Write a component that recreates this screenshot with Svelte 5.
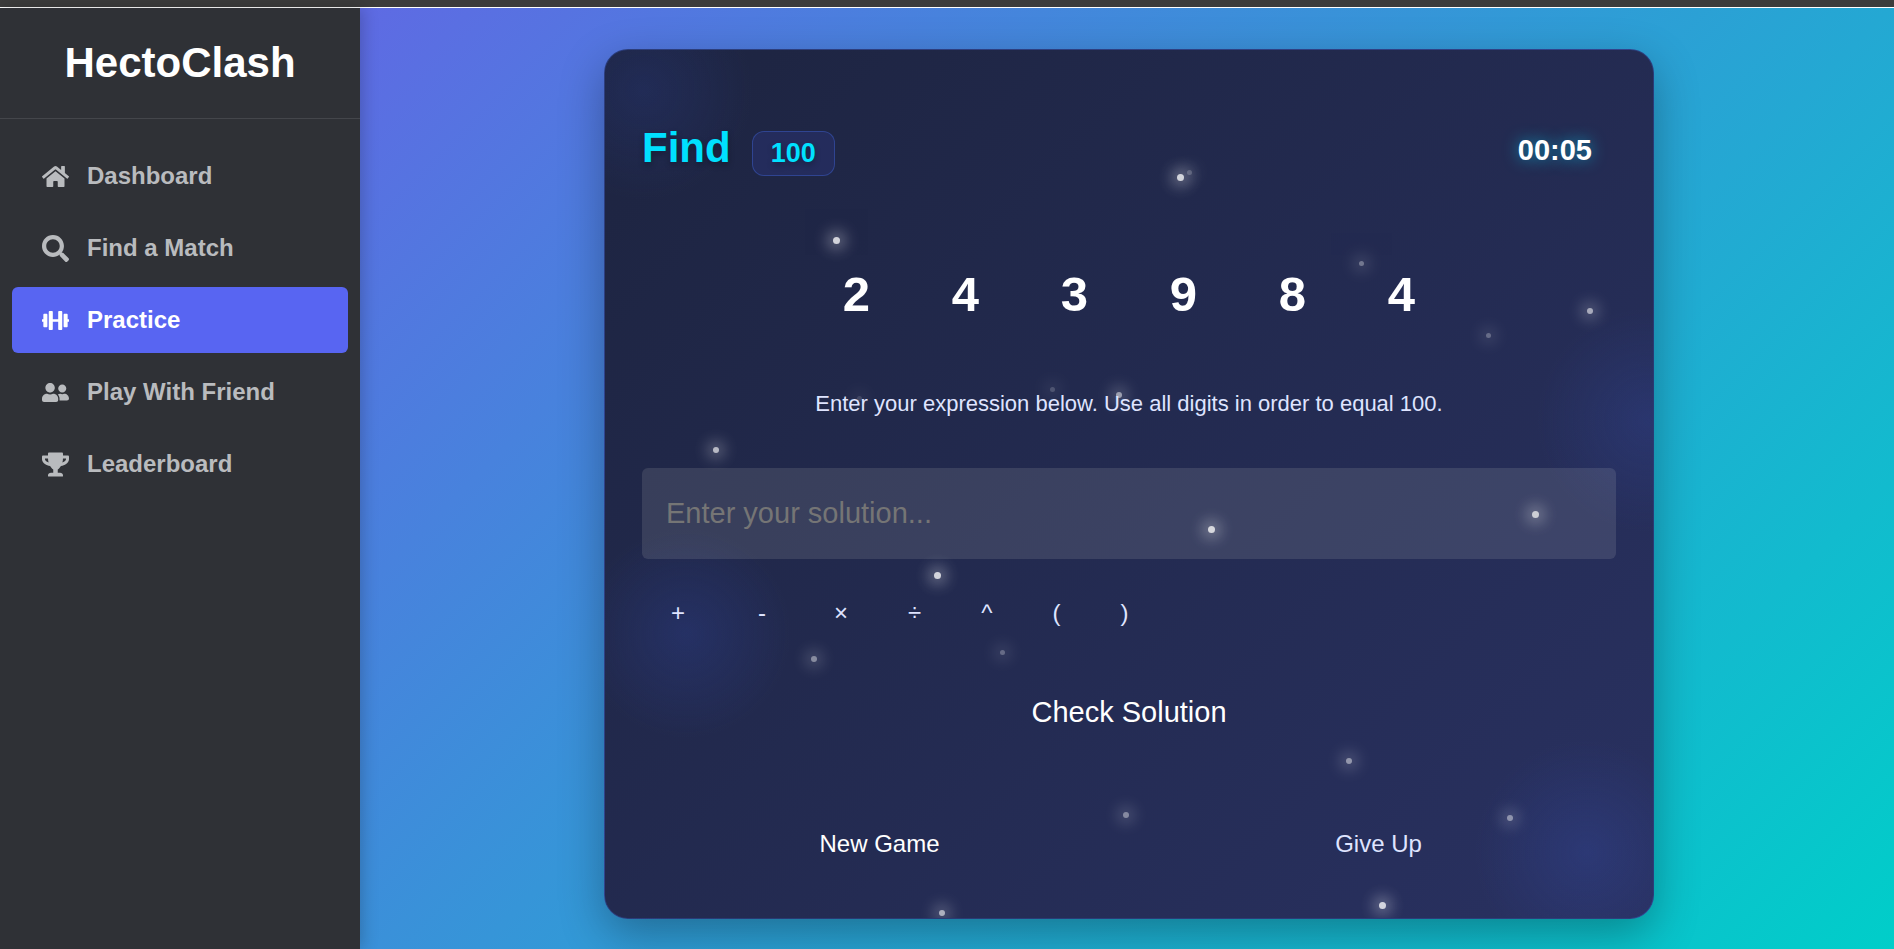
<script>
  const nav = [
    {
      label: 'Dashboard',
      box: '0 0 576 512',
      d: 'M280.37 148.26L96 300.11V464a16 16 0 0 0 16 16l112.06-.29a16 16 0 0 0 15.92-16V368a16 16 0 0 1 16-16h64a16 16 0 0 1 16 16v95.64a16 16 0 0 0 16 16.05L464 480a16 16 0 0 0 16-16V300L295.67 148.26a12.19 12.19 0 0 0-15.3 0zM571.6 251.47L488 182.56V44.05a12 12 0 0 0-12-12h-56a12 12 0 0 0-12 12v72.61L318.47 43a48 48 0 0 0-61 0L4.34 251.47a12 12 0 0 0-1.6 16.9l25.5 31A12 12 0 0 0 45.15 301l235.22-193.74a12.19 12.19 0 0 1 15.3 0L530.9 301a12 12 0 0 0 16.9-1.6l25.5-31a12 12 0 0 0-1.7-16.93z'
    },
    {
      label: 'Find a Match',
      box: '0 0 512 512',
      d: 'M505 442.7L405.3 343c-4.5-4.5-10.6-7-17-7H372c27.6-35.3 44-79.7 44-128C416 93.1 322.9 0 208 0S0 93.1 0 208s93.1 208 208 208c48.3 0 92.7-16.4 128-44v16.3c0 6.4 2.5 12.5 7 17l99.7 99.7c9.4 9.4 24.6 9.4 33.9 0l28.3-28.3c9.4-9.4 9.4-24.6.1-34zM208 336c-70.7 0-128-57.2-128-128 0-70.7 57.2-128 128-128 70.7 0 128 57.2 128 128 0 70.7-57.2 128-128 128z'
    },
    {
      label: 'Practice',
      active: true,
      box: '0 0 640 512',
      d: 'M104 96H56c-13.3 0-24 10.7-24 24v104H8c-4.4 0-8 3.6-8 8v48c0 4.4 3.6 8 8 8h24v104c0 13.3 10.7 24 24 24h48c13.3 0 24-10.7 24-24V120c0-13.3-10.7-24-24-24zm528 128h-24V120c0-13.3-10.7-24-24-24h-48c-13.3 0-24 10.7-24 24v272c0 13.3 10.7 24 24 24h48c13.3 0 24-10.7 24-24V288h24c4.4 0 8-3.6 8-8v-48c0-4.4-3.6-8-8-8zM456 32h-48c-13.3 0-24 10.7-24 24v168H256V56c0-13.3-10.7-24-24-24h-48c-13.3 0-24 10.7-24 24v400c0 13.3 10.7 24 24 24h48c13.3 0 24-10.7 24-24V288h128v168c0 13.3 10.7 24 24 24h48c13.3 0 24-10.7 24-24V56c0-13.3-10.7-24-24-24z'
    },
    {
      label: 'Play With Friend',
      box: '0 0 640 512',
      d: 'M192 256c61.9 0 112-50.1 112-112S253.9 32 192 32 80 82.1 80 144s50.1 112 112 112zm76.8 32h-8.3c-20.8 10-43.9 16-68.5 16s-47.6-6-68.5-16h-8.3C51.6 288 0 339.6 0 403.2V432c0 26.5 21.5 48 48 48h288c26.5 0 48-21.5 48-48v-28.8c0-63.6-51.6-115.2-115.2-115.2zM480 256c53 0 96-43 96-96s-43-96-96-96-96 43-96 96 43 96 96 96zm48 32h-3.8c-13.9 4.8-28.6 8-44.2 8s-30.3-3.2-44.2-8H432c-20.4 0-39.2 5.9-55.7 15.4 24.4 26.3 39.7 61.2 39.7 99.8v38.4c0 2.2-.5 4.3-.6 6.4H592c26.5 0 48-21.5 48-48 0-61.9-50.1-112-112-112z'
    },
    {
      label: 'Leaderboard',
      box: '0 0 576 512',
      d: 'M552 64H448V24c0-13.3-10.7-24-24-24H152c-13.3 0-24 10.7-24 24v40H24C10.7 64 0 74.7 0 88v56c0 35.7 22.5 72.4 61.9 100.7 31.5 22.7 69.8 37.1 110 41.7C203.3 338.5 240 360 240 360v72h-48c-35.3 0-64 20.7-64 56v12c0 6.6 5.4 12 12 12h296c6.6 0 12-5.4 12-12v-12c0-35.3-28.7-56-64-56h-48v-72s36.7-21.5 68.1-73.6c40.3-4.6 78.6-19 110-41.7 39.3-28.3 61.9-65 61.9-100.7V88c0-13.3-10.7-24-24-24zM99.3 192.8C74.9 175.2 64 155.6 64 144v-16h64.2c1 32.6 5.8 61.2 12.8 86.2-15.1-5.2-29.2-12.4-41.7-21.4zM512 144c0 16.1-17.7 36.1-35.3 48.8-12.5 9-26.7 16.2-41.8 21.4 7-25 11.8-53.6 12.8-86.2H512v16z'
    }
  ];

  const digits = [2, 4, 3, 9, 8, 4];
  const operators = ['+', '-', '×', '÷', '^', '(', ')'];

  // Each star: left, top, diameter, opacity
  const stars = [
    [572, 124, 7, 0.8],
    [582, 120, 5, 0.22],
    [228, 187, 7, 0.8],
    [754, 211, 5, 0.36],
    [982, 258, 6, 0.6],
    [881, 283, 5, 0.3],
    [252, 346, 5, 0.15],
    [445, 337, 5, 0.2],
    [511, 342, 6, 0.55],
    [108, 397, 6, 0.68],
    [603, 476, 7, 0.8],
    [927, 461, 7, 0.74],
    [329, 522, 7, 0.8],
    [206, 606, 6, 0.46],
    [395, 600, 5, 0.3],
    [741, 708, 6, 0.5],
    [518, 762, 6, 0.44],
    [902, 765, 6, 0.48],
    [334, 860, 6, 0.62],
    [774, 852, 7, 0.8]
  ];

  let solution = $state('');
</script>

<div class="page">
  <div class="strip"></div>
  <div class="app">
    <aside>
      <h1>HectoClash</h1>
      <nav>
        {#each nav as item}
          <a href="#top" class:active={item.active}>
            <svg viewBox={item.box} aria-hidden="true"><path d={item.d} /></svg>
            {item.label}
          </a>
        {/each}
      </nav>
    </aside>

    <main>
      <section class="card">
        <div class="sky" aria-hidden="true">
          {#each stars as [x, y, size, opacity]}
            <i style="left:{x}px;top:{y}px;width:{size}px;height:{size}px;opacity:{opacity}"></i>
          {/each}
        </div>

        <header>
          <div class="title">
            <h2>Find</h2>
            <span class="target">100</span>
          </div>
          <time>00:05</time>
        </header>

        <div class="digits">
          {#each digits as digit}
            <span>{digit}</span>
          {/each}
        </div>

        <label for="solution">Enter your expression below. Use all digits in order to equal 100.</label>
        <input id="solution" type="text" placeholder="Enter your solution..." bind:value={solution} />

        <div class="operators">
          {#each operators as op, i}
            <button type="button" class:wide={i < 2} onclick={() => (solution += op)}>{op}</button>
          {/each}
        </div>

        <button type="button" class="check">Check Solution</button>

        <div class="actions">
          <button type="button">New Game</button>
          <button type="button" class="muted">Give Up</button>
        </div>
      </section>
    </main>
  </div>
</div>

<style>
  :global(body) {
    margin: 0;
  }

  .page {
    display: flex;
    flex-direction: column;
    min-height: 100vh;
    font-family: 'Liberation Sans', Arial, sans-serif;
  }

  .strip {
    height: 7px;
    background: #3c3c3c;
    border-bottom: 1px solid #fff;
  }

  .app {
    flex: 1;
    display: flex;
    background: linear-gradient(135deg, #6c5ce7, #00cec9);
  }

  aside {
    flex: 0 0 360px;
    background: #2f3136;
    box-shadow: 3px 0 15px rgba(0, 0, 0, 0.2);
  }

  h1 {
    margin: 0;
    padding: 31px 0;
    border-bottom: 1px solid #44464b;
    color: #fff;
    font-size: 42px;
    line-height: 48px;
    text-align: center;
  }

  nav {
    display: flex;
    flex-direction: column;
    gap: 6px;
    padding: 24px 12px;
  }

  nav a {
    display: flex;
    align-items: center;
    gap: 18px;
    height: 66px;
    padding: 0 30px;
    border-radius: 6px;
    color: #b9bbbe;
    font-size: 24px;
    font-weight: 700;
    text-decoration: none;
  }

  nav a.active {
    background: #5865f2;
    color: #fff;
  }

  nav svg {
    width: 27px;
    height: 27px;
    fill: currentColor;
  }

  main {
    flex: 1;
    display: flex;
    justify-content: center;
    align-items: flex-start;
    padding: 41px 0 30px 4px;
  }

  .card {
    position: relative;
    box-sizing: border-box;
    width: 100%;
    max-width: 1050px;
    padding: 37px;
    border: 1px solid rgba(65, 105, 225, 0.3);
    border-radius: 24px;
    background:
      radial-gradient(circle at 38px 40px, rgba(50, 75, 180, 0.18), transparent 110px),
      radial-gradient(circle at 81px 583px, rgba(50, 75, 180, 0.24), transparent 105px),
      radial-gradient(circle at 1044px 370px, rgba(55, 80, 180, 0.24), transparent 112px),
      radial-gradient(circle at 982px 802px, rgba(55, 80, 180, 0.26), transparent 112px),
      linear-gradient(135deg, #1d2440, #293161);
    box-shadow: 0 15px 45px rgba(0, 0, 0, 0.3);
  }

  .sky {
    position: absolute;
    inset: 0;
    overflow: hidden;
    border-radius: 23px;
    pointer-events: none;
  }

  .sky i {
    position: absolute;
    border-radius: 50%;
    background: #fff;
    box-shadow: 0 0 15px 5px rgba(255, 255, 255, 0.5);
  }

  header,
  .digits,
  label,
  input,
  .operators,
  .check,
  .actions {
    position: relative;
  }

  header {
    display: flex;
    justify-content: space-between;
    align-items: center;
    padding: 37px 24px 35px 0;
  }

  .title {
    display: flex;
    align-items: baseline;
    gap: 21px;
    color: #00e0ff;
    text-shadow: 0 3px 6px rgba(0, 0, 0, 0.3);
  }

  h2 {
    margin: 0;
    font-size: 42px;
    line-height: 48px;
  }

  .target {
    padding: 6px 18px;
    border: 1px solid rgba(65, 105, 225, 0.4);
    border-radius: 12px;
    background: #242c5c;
    font-size: 27px;
    line-height: 31px;
    font-weight: 700;
  }

  time {
    color: #fff;
    font-size: 29px;
    line-height: 34px;
    font-weight: 700;
    text-shadow: 0 0 15px rgba(0, 224, 255, 0.6);
  }

  .digits {
    display: flex;
    justify-content: center;
    gap: 24px;
    margin-top: 37px;
  }

  .digits span {
    width: 85px;
    color: #fff;
    font-size: 49px;
    line-height: 92px;
    font-weight: 700;
    text-align: center;
  }

  label {
    display: block;
    margin: 51px 0;
    color: #dfe4ff;
    font-size: 22px;
    line-height: 26px;
    text-align: center;
  }

  input {
    display: block;
    box-sizing: border-box;
    width: 100%;
    height: 91px;
    padding: 0 24px;
    border: 0;
    border-radius: 6px;
    outline: 0;
    background: rgba(255, 255, 240, 0.11);
    color: #fff;
    font-family: inherit;
    font-size: 29px;
  }

  input::placeholder {
    color: #757575;
    opacity: 1;
  }

  button {
    padding: 0;
    border: 0;
    background: none;
    color: #fff;
    font-family: inherit;
    font-size: 24px;
    cursor: pointer;
  }

  .operators {
    display: flex;
    gap: 12px;
    margin-top: 27px;
  }

  .operators button {
    height: 54px;
    padding: 0 24px;
    color: #dfe4ff;
  }

  .operators .wide {
    min-width: 72px;
  }

  .check {
    display: block;
    width: 100%;
    height: 90px;
    margin-top: 27px;
    font-size: 29px;
  }

  .actions {
    display: grid;
    grid-template-columns: 1fr 1fr;
    gap: 24px;
    margin-top: 50px;
  }

  .actions button {
    height: 74px;
  }

  .actions .muted {
    color: #dfe4ff;
  }
</style>
